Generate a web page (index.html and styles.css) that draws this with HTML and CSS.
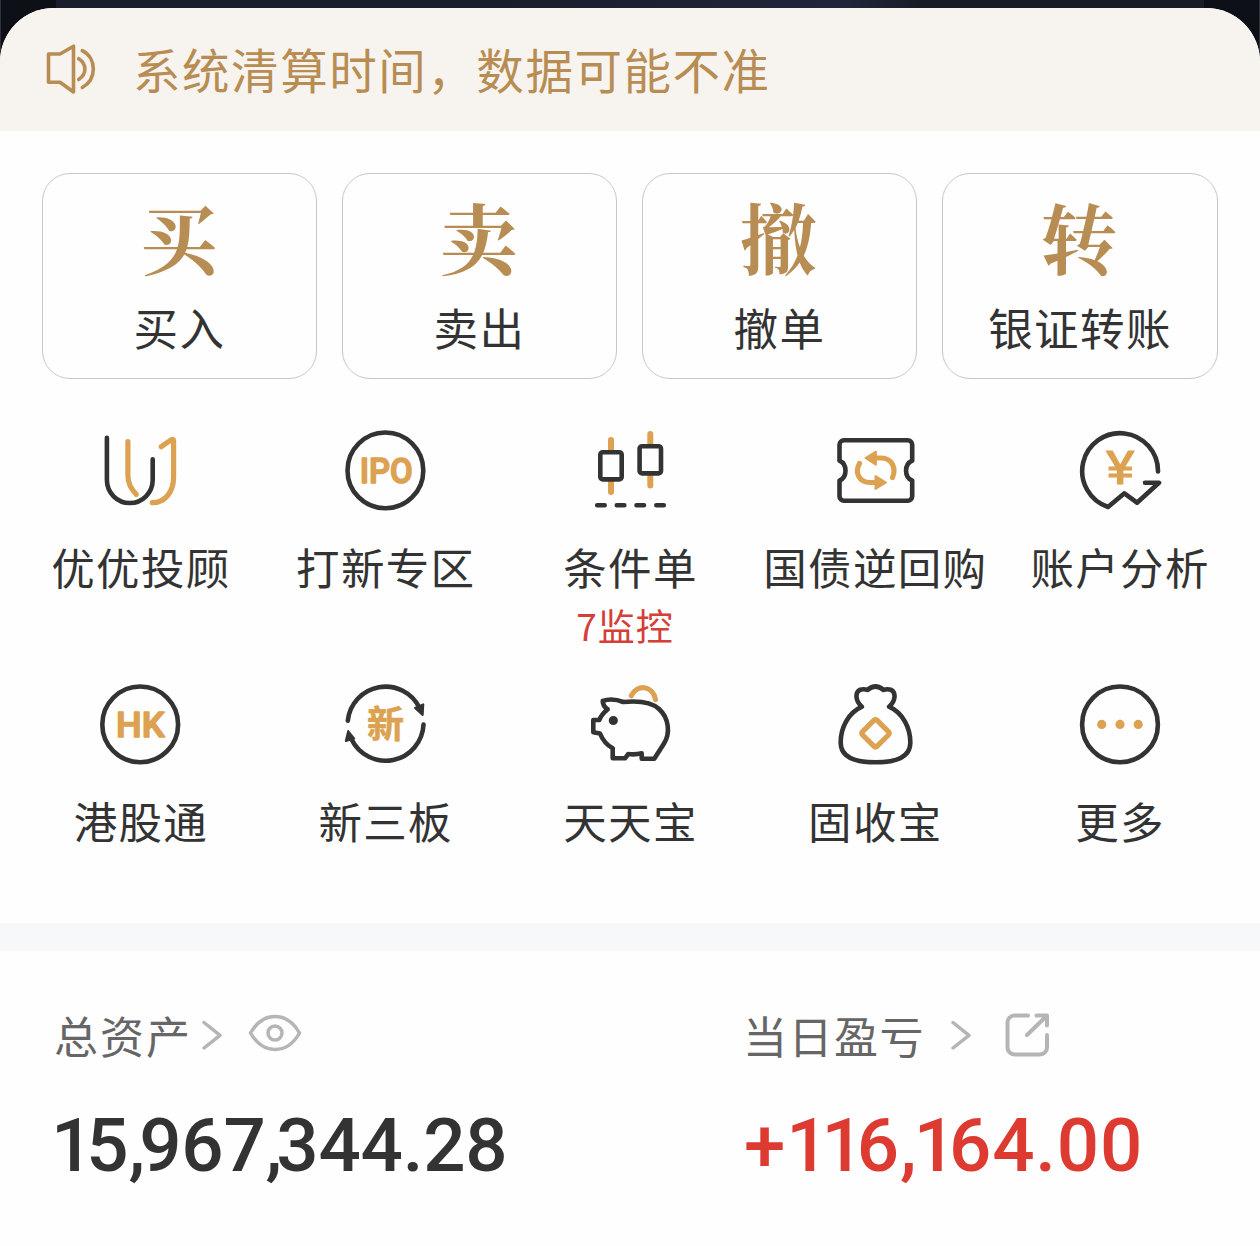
FILE: index.html
```html
<!DOCTYPE html>
<html lang="zh-CN">
<head>
<meta charset="utf-8">
<title>交易</title>
<link rel="stylesheet" href="styles.css">
</head>
<body>
<div class="backdrop">
<main class="panel">
  <header class="notice">
    <svg class="notice-icon" width="52" height="52" viewBox="0 0 52 52">
      <path d="M3.5 11H15L28.5 3.2V49L15 39.3H3.5Z"/>
      <path d="M33.7 15.7C42 21 42 31 33.7 36.5M37.3 7.7C52 15 52 36.500 37.300 44.500"/>
    </svg>
    <span class="notice-text">系统清算时间，数据可能不准</span>
  </header>

  <nav class="trades">
    <a class="trade"><b class="trade-mark">买</b><span class="trade-name">买入</span></a>
    <a class="trade"><b class="trade-mark">卖</b><span class="trade-name">卖出</span></a>
    <a class="trade"><b class="trade-mark">撤</b><span class="trade-name">撤单</span></a>
    <a class="trade"><b class="trade-mark">转</b><span class="trade-name">银证转账</span></a>
  </nav>

  <nav class="tools">
    <a class="tool">
      <svg class="icon" viewBox="0 0 84 84">
        <path class="gold" d="M29.900 13.700V48Q30 58 38.300 66.300M63.300 18.700L73.500 11.700Q75.600 10.500 75.600 13V49C75.600 64 67 74.700 54.300 74.700"/>
        <path class="ink" d="M8.900 9.700V52a22.900 23 0 0 0 45.800 0V31.300"/>
      </svg>
      <span class="tool-name">优优投顾</span>
    </a>
    <a class="tool">
      <svg class="icon" viewBox="0 0 84 84">
        <circle class="ink" cx="42.400" cy="42.400" r="37.900"/>
        <text class="mark latin" x="16.800" y="54.600" font-size="35" textLength="53" lengthAdjust="spacingAndGlyphs">IPO</text>
      </svg>
      <span class="tool-name">打新专区</span>
    </a>
    <a class="tool">
      <svg class="icon" viewBox="0 0 84 84">
        <path class="gold wick" d="M23 12V23M23 52V64M62.300 6V17M62.300 46V57.500"/>
        <rect class="ink" x="12.300" y="24.200" width="21.400" height="27.200" rx="2.500"/>
        <rect class="ink" x="51.600" y="18.200" width="21.400" height="27.200" rx="2.500"/>
        <path class="ink" d="M9.200 77.300H16.700M28.800 77.300H36.300M48.500 77.300H56M68.300 77.300H75.800"/>
      </svg>
      <span class="tool-name">条件单</span>
      <span class="tool-note">7监控</span>
    </a>
    <a class="tool">
      <svg class="icon" viewBox="0 0 84 84">
        <path class="ink" d="M11 12.300H74.700a4.500 4.500 0 0 1 4.500 4.500V32.700C71 36.500 71 49 79.200 52.700V68.200a4.500 4.500 0 0 1-4.500 4.500H11a4.500 4.500 0 0 1-4.500-4.500V52.700C14.500 49 14.500 36.500 6.500 32.700V16.800a4.500 4.500 0 0 1 4.500-4.500Z"/>
        <path class="gold" d="M43 30H48C59 30 63.500 40 59.500 49.500M42 54.500H37C26 54.500 21.500 44.500 26.500 35.500"/>
        <path class="gold-fill" d="M32.500 30L42.900 23.700V36.700ZM53 54.500L42.500 48V61Z"/>
      </svg>
      <span class="tool-name">国债逆回购</span>
    </a>
    <a class="tool">
      <svg class="icon" viewBox="0 0 84 84">
        <path class="ink" d="M80 43.500A37.900 37.900 0 1 0 30 79L46.400 65.300L59 74.700L81 54.700H67"/>
        <text class="mark latin yen" x="28" y="55.800" font-size="47" textLength="28.500" lengthAdjust="spacingAndGlyphs">¥</text>
      </svg>
      <span class="tool-name">账户分析</span>
    </a>
    <a class="tool">
      <svg class="icon" viewBox="0 0 84 84">
        <circle class="ink" cx="42.200" cy="42.400" r="37.900"/>
        <text class="mark latin" x="18" y="54.600" font-size="35" textLength="48.500" lengthAdjust="spacingAndGlyphs">HK</text>
      </svg>
      <span class="tool-name">港股通</span>
    </a>
    <a class="tool">
      <svg class="icon" viewBox="0 0 84 84">
        <path class="ink" d="M4.800 38.700A37.900 37.900 0 0 1 76.600 26M80.500 42.500A37.900 37.900 0 0 1 8.500 57.300"/>
        <path class="ink-fill" d="M72 26L80.300 22.300L79.700 33ZM5.200 49L11.200 56.500L2.800 59Z"/>
        <text class="mark cjk" x="42.400" y="55.600" font-size="37" text-anchor="middle">新</text>
      </svg>
      <span class="tool-name">新三板</span>
    </a>
    <a class="tool">
      <svg class="icon" viewBox="0 0 84 84">
        <path class="gold" d="M43.300 13.700C49 1.500 65 3.500 67.500 17.500"/>
        <path class="ink" d="M14.700 19Q24 15.500 35.300 20C51 18.500 63 19.500 71 27C81 36 82.500 51 76 61.500L66.300 76.700H53.700V71.300Q47 73 40.300 72L37 76.300H24.700V66.300Q16 61.500 12 51.500L5.300 50.300V38H11.300Q13 33 19.700 27.300Q15 24.500 14.700 19Z"/>
        <circle class="ink-fill" cx="25.300" cy="38.500" r="3.600"/>
      </svg>
      <span class="tool-name">天天宝</span>
    </a>
    <a class="tool">
      <svg class="icon" viewBox="0 0 84 84">
        <path class="ink" d="M28.900 24.700C22 19 22 10 27 7.800Q31 6.500 34.500 8Q42.500 1 50.500 8Q54 6.500 58 7.800C63 10 63 19 56.100 24.700C70 31 77.500 46 77.300 61C77.200 74 66 80.300 42.500 80.300S7.800 74 7.700 61C7.500 46 15 31 28.900 24.700Z"/>
        <rect class="gold" x="32.200" y="41" width="20.600" height="20.600" rx="2" transform="rotate(45 42.500 51.300)"/>
      </svg>
      <span class="tool-name">固收宝</span>
    </a>
    <a class="tool">
      <svg class="icon" viewBox="0 0 84 84">
        <circle class="ink" cx="42" cy="42.400" r="37.900"/>
        <g class="gold-dot"><circle cx="23.700" cy="42.400" r="4.600"/><circle cx="42" cy="42.400" r="4.600"/><circle cx="60.200" cy="42.400" r="4.600"/></g>
      </svg>
      <span class="tool-name">更多</span>
    </a>
  </nav>

  <section class="assets">
    <div class="asset">
      <div class="asset-head">
        <span class="asset-name total">总资产</span>
        <svg class="line" width="20" height="30" viewBox="0 0 20 30"><path d="M2 2.500L18 15.300L2 28"/></svg>
        <svg class="line eye" width="54" height="38" viewBox="0 0 54 38"><path d="M2.500 19C15-3 39-3 51.500 19C39 41 15 41 2.500 19Z"/><circle cx="27" cy="19" r="7"/></svg>
      </div>
      <div class="amount"><span class="one">1</span>5<span class="comma">,</span>967<span class="comma">,</span>344.28</div>
    </div>
    <div class="asset">
      <div class="asset-head">
        <span class="asset-name daily">当日盈亏</span>
        <svg class="line" width="20" height="30" viewBox="0 0 20 30"><path d="M2 2.500L18 15.300L2 28"/></svg>
        <svg class="line export" width="46" height="46" viewBox="0 0 46 46"><path d="M23 3.500H9.500a7 7 0 0 0-7 7V35.500a7 7 0 0 0 7 7H35a7 7 0 0 0 7-7V23M31.500 3.500H42V13.500M41 4.500L22 23"/></svg>
      </div>
      <div class="amount gain">+<span class="one">1</span><span class="one">1</span>6<span class="comma">,</span><span class="one">1</span>64.00</div>
    </div>
  </section>
</main>
</div>
</body>
</html>
```
FILE: styles.css
```css
* { box-sizing: border-box; }
body {
  margin: 0;
  background: #fff;
  color: #333;
  font-family: "Noto Sans CJK SC", sans-serif;
}
.backdrop {
  min-height: 1246px;
  padding-top: 8px;
  background: linear-gradient(90deg, #30343a 0 1px, #0e1018 1px 56px, #191e2c 56px 500px, #20253a 850px, #191c26 920px 1204px, #0d1017 1204px 1259px, #30343a 1259px) top / 100% 70px no-repeat;
}
.panel {
  min-height: 1238px;
  border-radius: 54px 54px 0 0;
  overflow: hidden;
  background: #fefefe;
}
.notice {
  height: 123px;
  padding: 0 0 2px 45px;
  display: flex;
  align-items: center;
  gap: 36px;
  background: #f7f3ee;
  color: #b78d54;
}
.notice-icon {
  fill: none;
  stroke: currentColor;
  stroke-width: 3.6;
  stroke-linecap: round;
  stroke-linejoin: round;
}
.notice-text {
  font-size: 47.500px;
  line-height: 60px;
  letter-spacing: 1.550px;
}
.trades {
  display: grid;
  grid-template-columns: repeat(3, 275px) 1fr;
  gap: 25px;
  padding: 42px 42px 0;
}
.trade {
  height: 206px;
  display: flex;
  flex-direction: column;
  align-items: center;
  border: 1px solid #cdc6be;
  border-radius: 28px;
}
.trade-mark {
  margin: 22px 2px 0 0;
  font: 700 77px/80px "Noto Serif CJK SC", "Noto Serif SC", "Noto Sans CJK SC", serif;
  color: #b78d54;
}
.trade-name {
  margin: 23px -1px 0;
  font-size: 44.500px;
  line-height: 56px;
  letter-spacing: 1.400px;
}
.tools {
  display: grid;
  grid-template-columns: repeat(5, 1fr);
  grid-template-rows: 254px 241px;
  padding: 49px 18px 0;
}
.tool {
  display: flex;
  flex-direction: column;
  align-items: center;
}
.icon {
  width: 84px;
  height: 84px;
  flex: none;
}
.tool-name {
  margin-top: 27px;
  font-size: 43.500px;
  line-height: 56px;
  letter-spacing: 1.300px;
  margin-right: -1px;
  white-space: nowrap;
}
.tool-note {
  margin: 7px 10px 0 0;
  font-size: 37px;
  line-height: 46px;
  letter-spacing: 1px;
  color: #d43f38;
}
.ink, .gold {
  fill: none;
  stroke: #333;
  stroke-width: 4.600;
  stroke-linecap: round;
  stroke-linejoin: round;
}
.gold { stroke: #dca251; stroke-width: 5.200; }
.wick { stroke-width: 6; }
.ink-fill { fill: #333; stroke: #333; stroke-width: 2; stroke-linejoin: round; }
.gold-fill { fill: #dca251; stroke: #dca251; stroke-width: 2; stroke-linejoin: round; }
.gold-dot { fill: #dca251; }
.mark { fill: #dca251; stroke: #dca251; stroke-linejoin: round; font-weight: 700; }
.latin { font-family: Roboto, sans-serif; font-weight: 500; stroke-width: 1.600; }
.yen { font-weight: 400; stroke-width: 1.200; }
.cjk { stroke-width: .6; }
.assets {
  border-top: 28px solid #f7f8fa;
  display: grid;
  grid-template-columns: 690px 1fr;
  padding: 54px 0 0 54px;
}
.asset-head {
  height: 60px;
  display: flex;
  align-items: center;
}
.asset-name {
  margin-top: -1px;
  font-size: 44px;
  line-height: 60px;
  color: #666;
}
.total { letter-spacing: 2px; margin-right: 10px; }
.daily { letter-spacing: 1.500px; margin-left: -1px; margin-right: 26px; }
.line {
  fill: none;
  stroke: #b5b5b5;
  stroke-width: 3.500;
  stroke-linecap: round;
  stroke-linejoin: round;
}
.eye { margin: 0 0 4px 26px; }
.export { margin-left: 34px; stroke-width: 4; }
.amount {
  margin: 36px 0 0 -3px;
  font: 500 74.500px/90px Roboto, sans-serif;
  letter-spacing: -.2px;
  white-space: nowrap;
}
.one { letter-spacing: -7px; }
.comma { letter-spacing: -6px; }
.gain { margin-left: 0; letter-spacing: .8px; color: #dd3b32; }
.gain .comma { letter-spacing: -3px; }
```
